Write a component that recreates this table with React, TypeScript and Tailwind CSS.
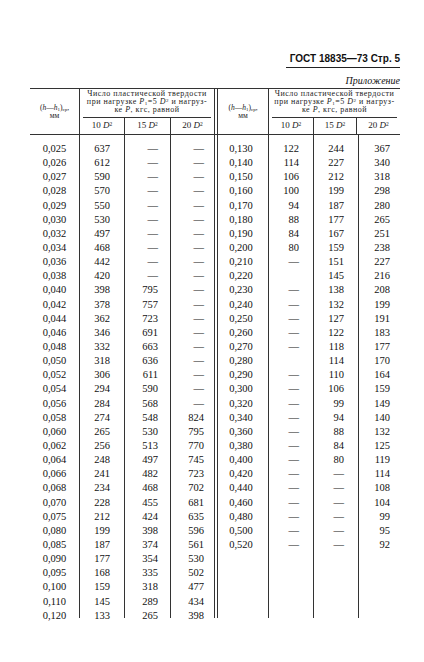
import React from "react";

const serif = { fontFamily: '"Liberation Serif", "DejaVu Serif", serif' };

const L0 = ["0,025","0,026","0,027","0,028","0,029","0,030","0,032","0,034","0,036","0,038","0,040","0,042","0,044","0,046","0,048","0,050","0,052","0,054","0,056","0,058","0,060","0,062","0,064","0,066","0,068","0,070","0,075","0,080","0,085","0,090","0,095","0,100","0,110","0,120"];
const L1 = ["637","612","590","570","550","530","497","468","442","420","398","378","362","346","332","318","306","294","284","274","265","256","248","241","234","228","212","199","187","177","168","159","145","133"];
const L2 = [...Array(10).fill("—"),"795","757","723","691","663","636","611","590","568","548","530","513","497","482","468","455","424","398","374","354","335","318","289","265"];
const L3 = [...Array(19).fill("—"),"824","795","770","745","723","702","681","635","596","561","530","502","477","434","398"];

const R0 = ["0,130","0,140","0,150","0,160","0,170","0,180","0,190","0,200","0,210","0,220","0,230","0,240","0,250","0,260","0,270","0,280","0,290","0,300","0,320","0,340","0,360","0,380","0,400","0,420","0,440","0,460","0,480","0,500","0,520"];
const R1 = ["122","114","106","100","94","88","84","80","—","","—","—","—","—","—","","—","—","—","—","—","—","—","—","—","—","—","—","—"];
const R2 = ["244","227","212","199","187","177","167","159","151","145","138","132","127","122","118","114","110","106","99","94","88","84","80","—","—","—","—","—","—"];
const R3 = ["367","340","318","298","280","265","251","238","227","216","208","199","191","183","177","170","164","159","149","140","132","125","119","114","108","104","99","95","92"];

function Col({ values, className, cell }: { values: string[]; className: string; cell: string }) {
  return (
    <div className={`flex flex-col pt-[7px] h-[483px] ${className}`}>
      {values.map((v, i) => (
        <div key={i} className={`h-[14.15px] leading-[14.15px] text-[10.5px] whitespace-nowrap ${cell}`}>
          {v}
        </div>
      ))}
    </div>
  );
}

function HName() {
  return (
    <div className="flex flex-col items-center justify-center text-[7.5px] leading-[8px] text-[#222]">
      <div>
        (<i>h</i>—<i>h</i><sub className="text-[5px]">1</sub>)<sub className="text-[5px]">ср</sub>,
      </div>
      <div>мм</div>
    </div>
  );
}

function Sub({ n }: { n: string }) {
  return (
    <span>
      {n} <i>D</i><sup className="text-[5.5px]">2</sup>
    </span>
  );
}

function Group({ w }: { w: string }) {
  return (
    <div className={`${w} border-l border-[#333] flex flex-col`}>
      <div className="h-[29px] mx-[3px] pt-[1px] border-b border-[#333] text-center text-[8px] leading-[8px] tracking-[0.5px] whitespace-nowrap text-[#222]">
        <div>Число пластической твердости</div>
        <div>
          при нагрузке <i>P</i><sub className="text-[5px]">1</sub>=5 <i>D</i><sup className="text-[5px]">2</sup> и нагруз-
        </div>
        <div>
          ке <i>P</i>, кгс, равной
        </div>
      </div>
      <div className="flex flex-1 text-[9px] text-[#222]">
        <div className="w-[44px] flex items-center justify-center"><Sub n="10" /></div>
        <div className="flex-1 border-l border-[#333] flex items-center justify-center"><Sub n="15" /></div>
        <div className="w-[44px] border-l border-[#333] flex items-center justify-center"><Sub n="20" /></div>
      </div>
    </div>
  );
}

export default function App() {
  return (
    <div className="w-[424px] h-[662px] bg-white text-[#111]" style={serif}>
      <div className="pt-[53px] pr-[24px] flex flex-col items-end">
        <div
          className="w-[114px] border-b border-[#222] text-right text-[10px] font-bold leading-[12px] pb-[2px] whitespace-nowrap"
          style={{ fontFamily: '"Liberation Sans", Arial, sans-serif' }}
        >
          ГОСТ 18835—73 Стр. 5
        </div>
        <div className="mt-[7px] italic text-[10px] leading-[12px]">Приложение</div>
      </div>

      <div className="ml-[30px] mt-[1px] w-[370px]">
        <div className="flex h-[47px] border-t-[1.5px] border-b border-[#333]">
          <div className="w-[49px] flex items-center justify-center">
            <HName />
          </div>
          <Group w="w-[135px]" />
          <div className="w-[54px] border-l-[4px] border-double border-[#333] flex items-center justify-center">
            <HName />
          </div>
          <Group w="w-[132px]" />
        </div>

        <div className="flex">
          <Col values={L0} className="w-[49px]" cell="text-center" />
          <Col values={L1} className="w-[45px] border-l border-[#333]" cell="text-right pr-[14px]" />
          <Col values={L2} className="w-[46px] border-l border-[#333]" cell="text-right pr-[12px]" />
          <Col values={L3} className="w-[44px] border-l border-[#333]" cell="text-right pr-[10px]" />
          <Col values={R0} className="w-[54px] border-l-[4px] border-double border-[#333]" cell="text-center pr-[4px]" />
          <Col values={R1} className="w-[45px] border-l border-[#333]" cell="text-right pr-[14px]" />
          <Col values={R2} className="w-[45px] border-l border-[#333]" cell="text-right pr-[14px]" />
          <Col values={R3} className="w-[42px] border-l border-[#333]" cell="text-right pr-[10px]" />
        </div>
      </div>
    </div>
  );
}
